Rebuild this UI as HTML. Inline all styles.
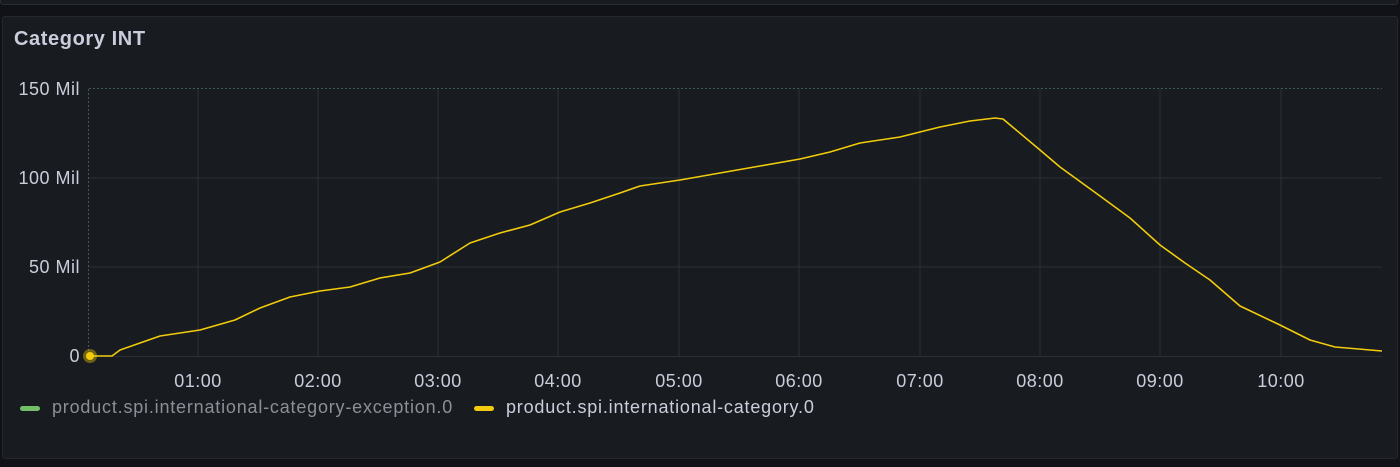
<!DOCTYPE html>
<html><head><style>
body{margin:0;width:1400px;height:467px;background:#111217;overflow:hidden;font-family:"Liberation Sans",sans-serif;}
.top{position:absolute;left:0;top:-10px;width:1396px;height:13px;border:1px solid #2a2d33;background:#181b1f;border-radius:3px;}
.panel{position:absolute;left:2px;top:16px;width:1394px;height:441px;background:#181b1f;border:1px solid #25282d;border-radius:3px;}
.title{position:absolute;left:14px;top:28px;color:#ccccdc;font-size:20px;font-weight:bold;letter-spacing:0.6px;}
svg{position:absolute;left:0;top:0;}
.lg{position:absolute;top:397px;font-size:18px;letter-spacing:0.8px;}
.sw{display:inline-block;width:20px;height:5px;border-radius:3px;vertical-align:middle;margin-right:12px;}
</style></head><body>
<div class="top"></div>
<div class="panel"></div>
<div class="title">Category INT</div>
<svg width="1400" height="467" font-family="Liberation Sans, sans-serif">
<g stroke="#2c2f35" stroke-width="1">
<line x1="89" y1="178" x2="1382" y2="178"/><line x1="89" y1="267" x2="1382" y2="267"/><line x1="89" y1="356.5" x2="1382" y2="356.5"/>
<line x1="198" y1="89" x2="198" y2="356"/><line x1="318" y1="89" x2="318" y2="356"/><line x1="438" y1="89" x2="438" y2="356"/><line x1="558" y1="89" x2="558" y2="356"/><line x1="679" y1="89" x2="679" y2="356"/><line x1="799" y1="89" x2="799" y2="356"/><line x1="920" y1="89" x2="920" y2="356"/><line x1="1040" y1="89" x2="1040" y2="356"/><line x1="1160" y1="89" x2="1160" y2="356"/><line x1="1281" y1="89" x2="1281" y2="356"/>
</g>
<line x1="89" y1="88.5" x2="1382" y2="88.5" stroke="#3f5a5e" stroke-dasharray="2,2"/>
<line x1="88.5" y1="89" x2="88.5" y2="356" stroke="#3f5a5e" stroke-dasharray="2,2"/>
<g fill="#ccccdc" font-size="18" letter-spacing="0.5" text-anchor="end">
<text x="80" y="95">150 Mil</text><text x="80" y="184">100 Mil</text><text x="80" y="273">50 Mil</text><text x="80" y="362">0</text>
</g>
<g fill="#ccccdc" font-size="18" letter-spacing="0.5" text-anchor="middle">
<text x="198" y="387">01:00</text><text x="318" y="387">02:00</text><text x="438" y="387">03:00</text><text x="558" y="387">04:00</text><text x="679" y="387">05:00</text><text x="799" y="387">06:00</text><text x="920" y="387">07:00</text><text x="1040" y="387">08:00</text><text x="1160" y="387">09:00</text><text x="1281" y="387">10:00</text>
</g>
<polyline fill="none" stroke="#f2cc0c" stroke-width="1.6" stroke-linejoin="round" points="89,356 112,356 120,350 140,343 160,336 180,333 200,330 235,320 260,308 290,297 320,291 350,287 380,278 410,273 440,262 470,243 500,233 530,225 560,212 590,203 620,193 640,186 680,180 720,173 760,166 800,159 830,152 860,143 900,137 940,127 970,121 995,118 1003,119 1040,150 1060,167 1100,196 1130,218 1160,245 1185,263 1210,280 1240,306 1280,325 1310,340 1335,347 1382,351"/>
<circle cx="90" cy="356" r="7" fill="#f2cc0c" opacity="0.4"/>
<circle cx="90" cy="356" r="4" fill="#f2cc0c"/>
</svg>
<div class="lg" style="left:20px;color:#8e8e98"><span class="sw" style="background:#73bf69"></span>product.spi.international-category-exception.0</div>
<div class="lg" style="left:474px;color:#ccccdc"><span class="sw" style="background:#f2cc0c"></span>product.spi.international-category.0</div>
</body></html>
